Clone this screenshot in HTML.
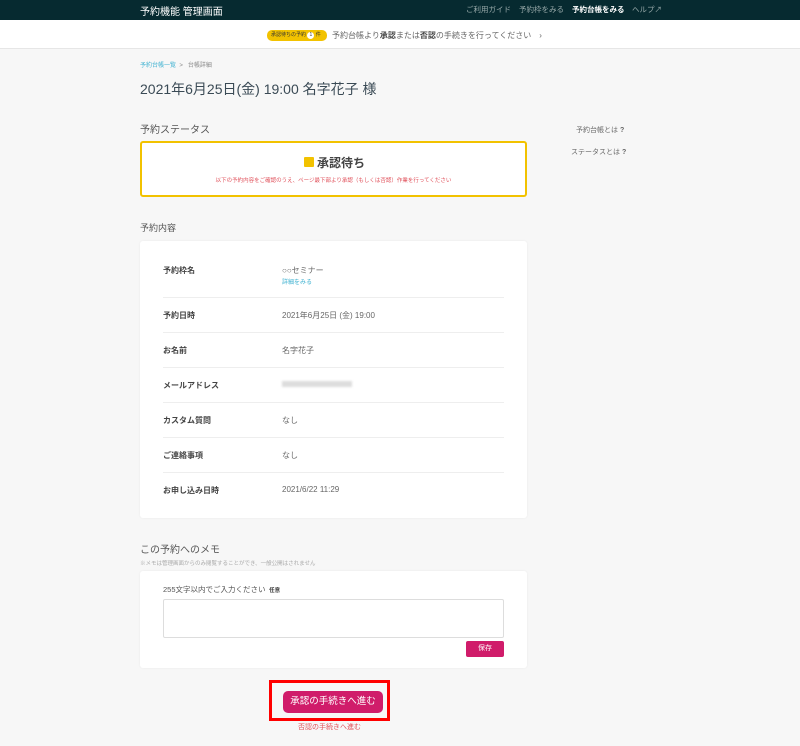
<!DOCTYPE html>
<html><head><meta charset="utf-8"><style>
*{margin:0;padding:0;box-sizing:border-box}
body{width:800px;height:746px;background:#f7f7f7;font-family:"Liberation Sans","Noto Sans CJK JP",sans-serif;color:#555;position:relative;overflow:hidden}
.a{position:absolute;white-space:nowrap}
.hd{position:absolute;left:0;top:0;width:800px;height:20px;background:#062a30}
.nb{position:absolute;left:0;top:20px;width:800px;height:29px;background:#fff;border-bottom:1px solid #e6e6e6}
.card{position:absolute;background:#fff;border-radius:3px;box-shadow:0 0 2px rgba(0,0,0,.06)}
.lbl{font-size:8px;font-weight:bold;color:#444}
.val{font-size:8px;color:#666}
.ln{position:absolute;left:163px;width:341px;height:1px;background:#eeeeee}
</style></head><body>
<div class="hd"></div>
<div class="a" style="left:140px;top:3px;font-size:10px;color:#fff">予約機能 管理画面</div>
<div class="a" style="left:466px;top:4px;font-size:7.5px;color:#9aa">ご利用ガイド</div>
<div class="a" style="left:519px;top:4px;font-size:7.5px;color:#9aa">予約枠をみる</div>
<div class="a" style="left:572px;top:4px;font-size:7.5px;color:#fff;font-weight:bold">予約台帳をみる</div>
<div class="a" style="left:632px;top:4px;font-size:7.5px;color:#9aa">ヘルプ↗</div>
<div class="nb"></div>
<div class="a" style="left:267px;top:30px;width:60px;height:11px;background:#f2c200;border-radius:5px;font-size:5px;color:#333;padding-left:4px;line-height:11px">承認待ちの予約 <span style="display:inline-block;width:7px;height:7px;border-radius:50%;background:#fff;text-align:center;line-height:7px">1</span> 件</div>
<div class="a" style="left:332px;top:30px;font-size:8px;color:#666">予約台帳より<b style="color:#444">承認</b>または<b style="color:#444">否認</b>の手続きを行ってください　›</div>
<div class="a" style="left:140px;top:60px;font-size:6px;color:#3bb0d0">予約台帳一覧 <span style="color:#888">&nbsp;&gt;&nbsp;&nbsp; 台帳詳細</span></div>
<div class="a" style="left:140px;top:79px;font-size:14px;color:#3a4a55">2021年6月25日(金) 19:00 名字花子 様</div>
<div class="a" style="left:140px;top:121px;font-size:10px;color:#555">予約ステータス</div>
<div class="a" style="left:576px;top:125px;font-size:7px;color:#666">予約台帳とは <b>?</b></div>
<div class="a" style="left:571px;top:147px;font-size:7px;color:#666">ステータスとは <b>?</b></div>
<div class="a" style="left:140px;top:141px;width:387px;height:56px;background:#fff;border:2px solid #f2c200;border-radius:3px"></div>
<div class="a" style="left:304px;top:157px;width:10px;height:10px;background:#f2c200;border-radius:1px"></div>
<div class="a" style="left:317px;top:154px;font-size:12px;font-weight:bold;color:#444">承認待ち</div>
<div class="a" style="left:140px;top:176px;width:387px;text-align:center;font-size:5.5px;color:#e0505a">以下の予約内容をご確認のうえ、ページ最下部より承認（もしくは否認）作業を行ってください</div>
<div class="a" style="left:140px;top:221px;font-size:9px;color:#555">予約内容</div>
<div class="card" style="left:140px;top:241px;width:387px;height:277px"></div>
<div class="a lbl" style="left:163px;top:265px">予約枠名</div>
<div class="a val" style="left:282px;top:265px">○○セミナー</div>
<div class="a" style="left:282px;top:277px;font-size:6px;color:#3bb0d0">詳細をみる</div>
<div class="ln" style="top:297px"></div>
<div class="a lbl" style="left:163px;top:310px">予約日時</div><div class="a val" style="left:282px;top:310px">2021年6月25日 (金) 19:00</div>
<div class="ln" style="top:332px"></div>
<div class="a lbl" style="left:163px;top:345px">お名前</div><div class="a val" style="left:282px;top:345px">名字花子</div>
<div class="ln" style="top:367px"></div>
<div class="a lbl" style="left:163px;top:380px">メールアドレス</div><div class="a" style="left:282px;top:381px;width:70px;height:6px;background:#ddd;filter:blur(1px)"></div>
<div class="ln" style="top:402px"></div>
<div class="a lbl" style="left:163px;top:415px">カスタム質問</div><div class="a val" style="left:282px;top:415px">なし</div>
<div class="ln" style="top:437px"></div>
<div class="a lbl" style="left:163px;top:450px">ご連絡事項</div><div class="a val" style="left:282px;top:450px">なし</div>
<div class="ln" style="top:472px"></div>
<div class="a lbl" style="left:163px;top:485px">お申し込み日時</div><div class="a val" style="left:282px;top:485px">2021/6/22 11:29</div>
<div class="a" style="left:140px;top:541px;font-size:10px;color:#555">この予約へのメモ</div>
<div class="a" style="left:140px;top:559px;font-size:5.5px;color:#aaa">※メモは管理画面からのみ閲覧することができ、一般公開はされません</div>
<div class="card" style="left:140px;top:571px;width:387px;height:97px"></div>
<div class="a" style="left:163px;top:584px;font-size:7.5px;color:#555">255文字以内でご入力ください <b style="font-size:5.5px;color:#333">&nbsp;任意</b></div>
<div class="a" style="left:163px;top:599px;width:341px;height:39px;border:1px solid #ddd;border-radius:2px;background:#fff"></div>
<div class="a" style="left:466px;top:641px;width:38px;height:16px;background:#d01c6a;border-radius:2px;color:#fff;font-size:7px;text-align:center;line-height:16px">保存</div>
<div class="a" style="left:269px;top:680px;width:121px;height:41px;border:3px solid #f00"></div>
<div class="a" style="left:283px;top:691px;width:100px;height:22px;background:#d01c6a;border-radius:5px;color:#fff;font-size:9.5px;text-align:center;line-height:22px">承認の手続きへ進む</div>
<div class="a" style="left:269px;top:722px;width:121px;text-align:center;font-size:7px;color:#e0505a">否認の手続きへ進む</div>
</body></html>
